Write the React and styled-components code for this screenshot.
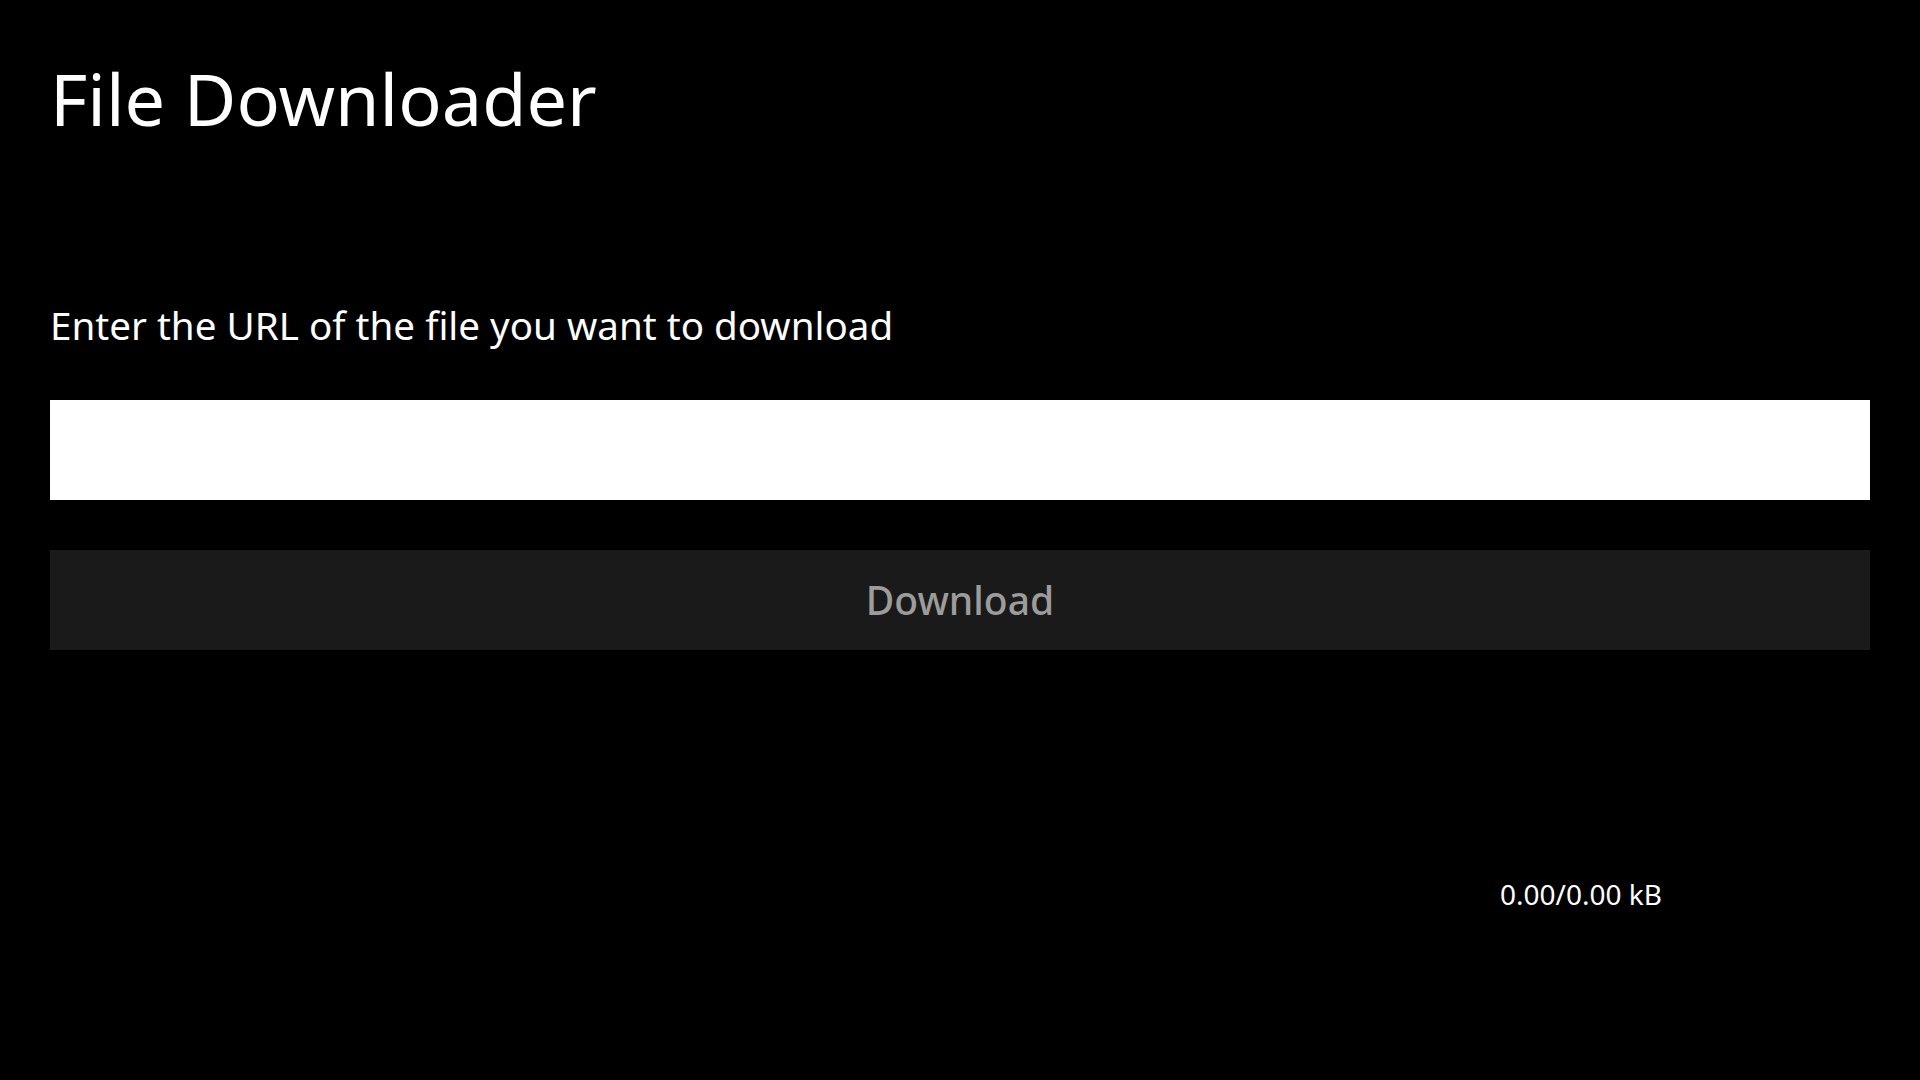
import React from "react";
import styled, { createGlobalStyle } from "styled-components";

const Global = createGlobalStyle`
  html, body { margin: 0; padding: 0; background: #000; }
  body { font-family: "Noto Sans", "Open Sans", sans-serif; color: #fff; }
  * { box-sizing: border-box; }
`;

const Page = styled.div`
  min-height: 1080px;
  background: #000;
  padding: 0 50px;
  display: flex;
  flex-direction: column;
`;

const Title = styled.h1`
  margin: 0;
  padding-top: 48px;
  font-size: 72px;
  font-weight: 400;
  line-height: 100px;
  color: #fff;
`;

const Label = styled.div`
  margin-top: 150px;
  font-size: 38.6px;
  line-height: 54px;
  color: #fff;
`;

const UrlInput = styled.input`
  margin-top: 48px;
  height: 100px;
  width: 100%;
  border: none;
  outline: none;
  background: #fff;
  padding: 0 16px;
  font-family: inherit;
  font-size: 36px;
`;

const DownloadButton = styled.button`
  margin-top: 50px;
  height: 100px;
  width: 100%;
  border: none;
  background: #1a1a1a;
  color: #9c9c9c;
  font-family: inherit;
  font-size: 39px;
  font-weight: 500;
  padding-top: 0;
`;

const StatusRow = styled.div`
  margin-top: 226px;
  display: flex;
  justify-content: flex-end;
  padding-right: 208px;
`;

const StatusText = styled.span`
  font-size: 28px;
  line-height: 36px;
  color: #fff;
`;

export default function App() {
  return (
    <>
      <Global />
      <Page>
        <Title>File Downloader</Title>
        <Label>Enter the URL of the file you want to download</Label>
        <UrlInput type="text" />
        <DownloadButton disabled>Download</DownloadButton>
        <StatusRow>
          <StatusText>0.00/0.00 kB</StatusText>
        </StatusRow>
      </Page>
    </>
  );
}
